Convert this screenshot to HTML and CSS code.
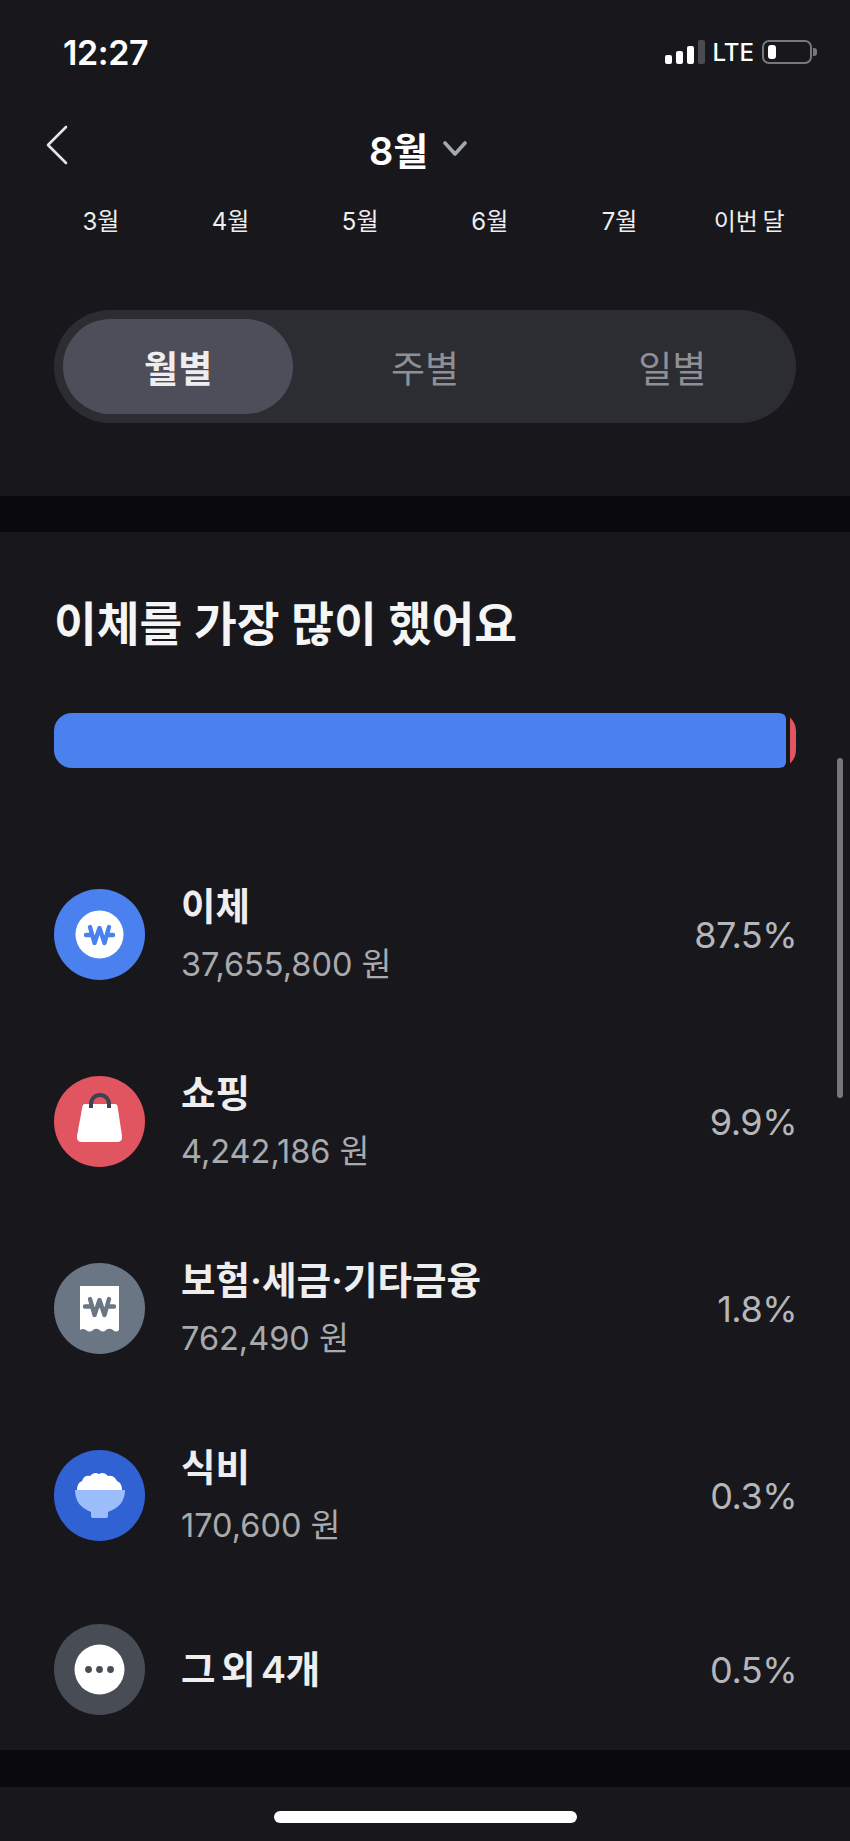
FILE: index.html
```html
<!DOCTYPE html>
<html lang="ko">
<head>
    <meta charset="utf-8">
    <title>8월 소비</title>
    <link rel="stylesheet" href="styles.css">
</head>
<body>
    <div class="screen">
        <!-- 상단 -->
        <section class="top">
            <div class="status">
                <span class="time">12:27</span>
                <div class="status-right">
                    <div class="signal">
                        <i class="s1"></i><i class="s2"></i><i class="s3"></i><i class="s4"></i>
                    </div>
                    <span class="lte">LTE</span>
                    <div class="battery"><i></i></div>
                    <div class="battery-nub"></div>
                </div>
            </div>

            <div class="head">
                <svg class="back" width="23" height="40" viewBox="0 0 23 40">
                    <path d="M21 2 L3 20 L21 38" fill="none" stroke="#e4e4e6" stroke-width="2.6" stroke-linecap="round" stroke-linejoin="round"/>
                </svg>
                <div class="month-title">
                    <span>8월</span>
                    <svg width="24" height="15" viewBox="0 0 24 15">
                        <path d="M2 2 L12 13 L22 2" fill="none" stroke="#a3a8b0" stroke-width="3.6" stroke-linecap="round" stroke-linejoin="round"/>
                    </svg>
                </div>
            </div>

            <div class="months">
                <span>3월</span>
                <span>4월</span>
                <span>5월</span>
                <span>6월</span>
                <span>7월</span>
                <span>이번 달</span>
            </div>

            <div class="tabs">
                <div class="tab active"><span>월별</span></div>
                <div class="tab"><span>주별</span></div>
                <div class="tab"><span>일별</span></div>
            </div>
        </section>

        <div class="band"></div>

        <!-- 카테고리 -->
        <section class="main">
            <h1>이체를 가장 많이 했어요</h1>

            <div class="bar">
                <div class="bar-blue"></div>
                <div class="bar-red"></div>
            </div>

            <div class="list">
                <div class="row">
                    <svg class="icon" viewBox="0 0 91 91">
                        <circle cx="45.5" cy="45.5" r="45.5" fill="#4a81ee"/>
                        <circle cx="45.5" cy="45.5" r="24" fill="#fff"/>
                        <path d="M36 38 L40.5 54 L45.5 39 L50.5 54 L55 38 M32 46 H37.500 M53.500 46 H59" fill="none" stroke="#4a81ee" stroke-width="4.4" stroke-linecap="round" stroke-linejoin="round"/>
                    </svg>
                    <div class="info">
                        <div class="name">이체</div>
                        <div class="amount">37,655,800 원</div>
                    </div>
                    <div class="pct">87.5%</div>
                </div>

                <div class="row">
                    <svg class="icon" viewBox="0 0 91 91">
                        <circle cx="45.5" cy="45.5" r="45.5" fill="#e0555f"/>
                        <path d="M37 30 V28 a9 9 0 0 1 18 0 V30" fill="none" stroke="#3b4252" stroke-width="4"/>
                        <path d="M31 28 H61 Q63 28 63.500 30 L68 60 Q68.500 66 63 66 H28 Q22.500 66 23 60 L28.500 30 Q29 28 31 28 Z" fill="#fff"/>
                        <path d="M37 28 V32 M55 28 V32" stroke="#3b4252" stroke-width="4"/>
                    </svg>
                    <div class="info">
                        <div class="name">쇼핑</div>
                        <div class="amount">4,242,186 원</div>
                    </div>
                    <div class="pct">9.9%</div>
                </div>

                <div class="row">
                    <svg class="icon" viewBox="0 0 91 91">
                        <circle cx="45.5" cy="45.5" r="45.5" fill="#6b7684"/>
                        <path d="M26 23 H65 V67 Q62 70 59 67 Q55.500 64.500 52 67 Q49 70 45.500 67 Q42 64.500 39 67 Q35.500 70 32 67 Q29 65 26 67 Z" fill="#fff"/>
                        <path d="M36 36 L40.500 52 L45.500 37 L50.500 52 L55 36 M31 43.500 H37 M54 43.500 H60" fill="none" stroke="#6b7684" stroke-width="4.400" stroke-linecap="round" stroke-linejoin="round"/>
                    </svg>
                    <div class="info">
                        <div class="name">보험·세금·기타금융</div>
                        <div class="amount">762,490 원</div>
                    </div>
                    <div class="pct">1.8%</div>
                </div>

                <div class="row row-tail">
                    <svg class="icon" viewBox="0 0 91 91">
                        <circle cx="45.5" cy="45.5" r="45.5" fill="#3162d4"/>
                        <path d="M23 40 Q23 33 28 31 Q30 25 36 26 Q40 21 45 24 Q50 21 54 26 Q60 25 63 31 Q68 33 68 40 Z" fill="#fff"/>
                        <path d="M21 40 H71 Q71 56 54 62 V66 Q54 68 52 68 H39 Q37 68 37 66 V62 Q21 56 21 40 Z" fill="#9bbdfb"/>
                    </svg>
                    <div class="info">
                        <div class="name">식비</div>
                        <div class="amount">170,600 원</div>
                    </div>
                    <div class="pct">0.3%</div>
                </div>

                <div class="row row-last">
                    <svg class="icon" viewBox="0 0 91 91">
                        <circle cx="45.5" cy="45.5" r="45.5" fill="#484c54"/>
                        <circle cx="45.5" cy="45.5" r="25" fill="#fff"/>
                        <circle cx="34.500" cy="45.500" r="3.400" fill="#484c54"/>
                        <circle cx="45.500" cy="45.500" r="3.400" fill="#484c54"/>
                        <circle cx="56.500" cy="45.500" r="3.400" fill="#484c54"/>
                    </svg>
                    <div class="info">
                        <div class="name">그 외 4개</div>
                    </div>
                    <div class="pct">0.5%</div>
                </div>
            </div>
        </section>

        <div class="band band-low"></div>

        <div class="home">
            <div class="home-bar"></div>
        </div>

        <div class="scroll-thumb"></div>
    </div>
</body>
</html>
```

FILE: styles.css
```css
* {
    box-sizing: border-box;
}

html, body {
    margin: 0;
    padding: 0;
    background: #18181c;
}

.screen {
    position: relative;
    width: 850px;
    height: 1841px;
    overflow: hidden;
    font-family: Inter, "Noto Sans CJK KR", sans-serif;
    color: #fff;
    background: #18181c;
}

/* 상단 */
.top {
    height: 496px;
    padding-top: 34px;
}

.status {
    display: flex;
    justify-content: space-between;
    align-items: center;
    height: 36px;
    padding: 0 33px 0 63px;
}

.time {
    font-size: 34px;
    font-weight: 600;
    letter-spacing: -0.4px;
}

.status-right {
    display: flex;
    align-items: center;
}

.signal {
    display: flex;
    align-items: flex-end;
    gap: 4px;
    height: 24px;
    margin-right: 8px;
}

.signal i {
    display: block;
    width: 7px;
    border-radius: 2px;
    background: #fff;
}

.signal .s1 { height: 9px; }
.signal .s2 { height: 13px; }
.signal .s3 { height: 18px; }
.signal .s4 { height: 24px; background: #4a4b50; }

.lte {
    font-size: 24px;
    font-weight: 500;
    margin-right: 8px;
}

.battery {
    width: 50px;
    height: 24px;
    padding: 3px 4px;
    border: 2px solid #77787c;
    border-radius: 7px;
}

.battery i {
    display: block;
    width: 8px;
    height: 14px;
    border-radius: 3px;
    background: #fff;
}

.battery-nub {
    width: 4px;
    height: 8px;
    margin-left: 1px;
    border-radius: 0 3px 3px 0;
    background: #77787c;
}

.head {
    display: flex;
    align-items: center;
    height: 46px;
    margin-top: 55px;
    padding-left: 45px;
}

.back {
    margin-top: -7px;
}

.month-title {
    display: flex;
    align-items: center;
    gap: 15px;
    margin-left: 301px;
    font-size: 38px;
    font-weight: 600;
}

.months {
    display: grid;
    grid-template-columns: repeat(6, 1fr);
    margin-top: 33px;
    padding: 0 36px;
    font-size: 24px;
    line-height: 36px;
    text-align: center;
    word-spacing: -2px;
    color: #eeeeef;
}

.tabs {
    display: grid;
    grid-template-columns: repeat(3, 1fr);
    height: 113px;
    margin: 70px 54px 0;
    padding: 9px 0;
    border-radius: 57px;
    background: #2c2d33;
}

.tab {
    display: flex;
    align-items: center;
    justify-content: center;
    border-radius: 48px;
    font-size: 37px;
    color: #8f9095;
}

.tab.active {
    margin: 0 8px 0 9px;
    font-weight: 700;
    color: #eeeeef;
    background: #4d4e5a;
}

.band {
    height: 36px;
    background: #0a0a0c;
}

.band-low {
    height: 37px;
}

/* 카테고리 */
.main {
    height: 1218px;
    padding: 64px 54px 0;
}

h1 {
    margin: 0;
    font-size: 46.5px;
    font-weight: 600;
    line-height: 56px;
    color: #f5f5f6;
}

.bar {
    display: flex;
    gap: 4px;
    height: 55px;
    margin-top: 61px;
    overflow: hidden;
    border-radius: 18px;
}

.bar-blue {
    flex: 1;
    border-radius: 0 6px 6px 0;
    background: #4a81ee;
}

.bar-red {
    width: 6px;
    background: #e0555f;
}

.list {
    margin-top: 121px;
}

.row {
    display: flex;
    align-items: center;
    height: 91px;
    margin-bottom: 96px;
}

.row-tail {
    margin-bottom: 83px;
}

.row-last {
    margin-bottom: 0;
}

.icon {
    flex: none;
    width: 91px;
    height: 91px;
    margin-right: 36px;
}

.info {
    flex: 1;
}

.name {
    font-size: 37.5px;
    font-weight: 600;
    line-height: 46px;
    word-spacing: -4px;
    color: #eeeeef;
}

.amount {
    margin-top: 15px;
    font-size: 32.5px;
    line-height: 40px;
    color: #a9aaae;
}

.pct {
    margin-right: -1px;
    font-size: 36px;
    letter-spacing: -0.5px;
    color: #b5b6ba;
}

.home {
    display: flex;
    justify-content: center;
    padding-top: 24px;
}

.home-bar {
    width: 303px;
    height: 12px;
    border-radius: 6px;
    background: #fff;
}

.scroll-thumb {
    position: absolute;
    top: 758px;
    left: 837px;
    width: 6px;
    height: 340px;
    border-radius: 3px;
    background: #77777a;
}
```
